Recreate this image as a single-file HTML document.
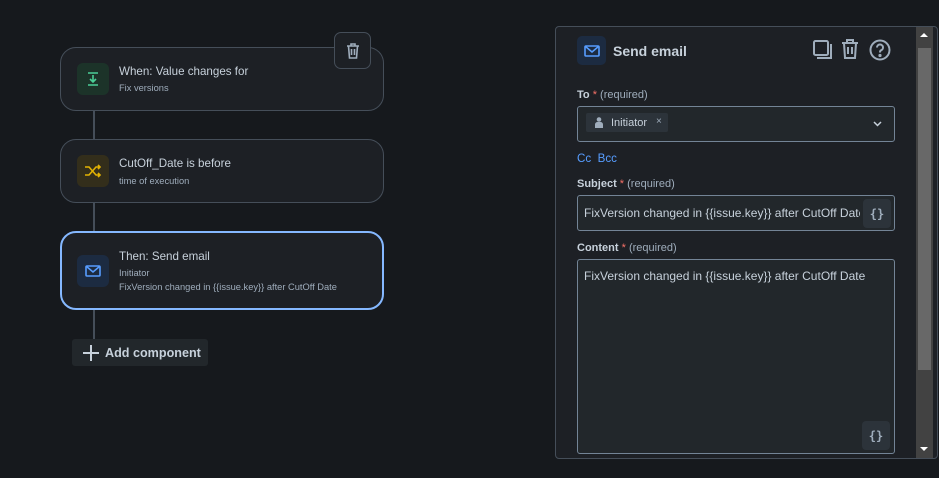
<!DOCTYPE html>
<html><head><meta charset="utf-8"><style>
*{box-sizing:border-box;margin:0;padding:0}
body{width:939px;height:478px;background:#16191d;font-family:"Liberation Sans",sans-serif;position:relative;overflow:hidden;color:#c7d1db}
.card{position:absolute;left:60px;width:324px;background:#1d2025;border:1px solid #454e59;border-radius:16px}
.ic{position:absolute;left:16px;width:32px;height:32px;border-radius:6px;display:flex;align-items:center;justify-content:center}
.t{position:absolute;left:58px;font-size:11.6px;color:#c7d1db}
.s{position:absolute;left:58px;font-size:9.3px;color:#9fadbc}
.line{position:absolute;left:93px;width:2px;background:#454e59}
.lbl{position:absolute;left:577px;font-size:11px;color:#9fadbc}
.lbl b{color:#c7d1db;font-weight:bold}
.lbl i{color:#f87168;font-style:normal}
.inp{position:absolute;left:577px;width:318px;border:1px solid #738496;border-radius:3px;background:#22272b}
.br{position:absolute;width:28px;height:29px;background:#2c333a;border-radius:4px;color:#9fadbc;font-size:12px;font-weight:bold;display:flex;align-items:center;justify-content:center;font-family:"DejaVu Sans Mono",monospace}
</style></head><body>
<div class="line" style="top:110px;height:30px"></div>
<div class="line" style="top:202px;height:30px"></div>
<div class="line" style="top:309px;height:30px"></div>

<div class="card" style="top:47px;height:64px">
 <div class="ic" style="top:15px;background:#1c3329"><svg width="16" height="16" viewBox="0 0 16 16" fill="none" stroke="#4bce97" stroke-width="1.6"><path d="M3 2h10M3 14h10M8 4v7M5 8l3 3 3-3"/></svg></div>
 <div class="t" style="top:17px">When: Value changes for</div>
 <div class="s" style="top:35px">Fix versions</div>
</div>
<div style="position:absolute;left:334px;top:32px;width:37px;height:37px;background:#1d2025;border:1px solid #454e59;border-radius:7px;display:flex;align-items:center;justify-content:center"><svg width="14" height="16" viewBox="0 0 14 16" fill="none" stroke="#9fadbc" stroke-width="1.6"><path d="M1 3h12M5 3V1h4v2M2.5 3l1 12h7l1-12M5.5 6v6M8.5 6v6"/></svg></div>

<div class="card" style="top:139px;height:64px">
 <div class="ic" style="top:15px;background:#332e1b"><svg width="18" height="14" viewBox="0 0 18 14" fill="none" stroke="#e2b203" stroke-width="1.6"><path d="M1 3h4l7 8h4M1 11h4l7-8h4M14 1l2 2-2 2M14 9l2 2-2 2"/></svg></div>
 <div class="t" style="top:17px">CutOff_Date is before</div>
 <div class="s" style="top:36px">time of execution</div>
</div>

<div class="card" style="top:231px;height:79px;border:2px solid #85b8ff">
 <div class="ic" style="top:22px;left:15px;background:#1c2b41"><svg width="16" height="12" viewBox="0 0 16 12" fill="none" stroke="#579dff" stroke-width="1.6"><rect x="1" y="1" width="14" height="10" rx="1"/><path d="M1.5 1.5L8 7l6.5-5.5"/></svg></div>
 <div class="t" style="top:17px;left:57px">Then: Send email</div>
 <div class="s" style="top:35px;left:57px">Initiator</div>
 <div class="s" style="top:49px;left:57px">FixVersion changed in {{issue.key}} after CutOff Date</div>
</div>

<div style="position:absolute;left:72px;top:339px;width:136px;height:27px;background:#22272b;border-radius:3px;display:flex;align-items:center;padding-left:10px;font-size:12.6px;font-weight:bold;color:#c7d1db"><svg width="18" height="18" viewBox="0 0 18 18" stroke="#c7d1db" stroke-width="2"><path d="M9 1v16M1 9h16"/></svg><span style="margin-left:5px">Add component</span></div>

<div style="position:absolute;left:555px;top:26px;width:383px;height:433px;background:#1d2025;border:1px solid #454e59;border-radius:4px"></div>
<div style="position:absolute;left:916px;top:27px;width:17px;height:431px;background:#424242"></div>
<div style="position:absolute;left:918px;top:48px;width:13px;height:322px;background:#686868"></div>
<div style="position:absolute;left:920px;top:33px;width:0;height:0;border-left:4px solid transparent;border-right:4px solid transparent;border-bottom:4px solid #fff"></div>
<div style="position:absolute;left:920px;top:447px;width:0;height:0;border-left:4px solid transparent;border-right:4px solid transparent;border-top:4px solid #fff"></div>

<div style="position:absolute;left:577px;top:36px;width:29px;height:29px;background:#1c2b41;border-radius:5px;display:flex;align-items:center;justify-content:center"><svg width="16" height="12" viewBox="0 0 16 12" fill="none" stroke="#579dff" stroke-width="1.6"><rect x="1" y="1" width="14" height="10" rx="1"/><path d="M1.5 1.5L8 7l6.5-5.5"/></svg></div>
<div style="position:absolute;left:613px;top:43px;font-size:14px;font-weight:bold;color:#c7d1db">Send email</div>
<svg style="position:absolute;left:811px;top:38px" width="82" height="24" viewBox="0 0 82 24" fill="none" stroke="#9fadbc" stroke-width="2"><rect x="3" y="3" width="14" height="14" rx="1.5"/><path d="M20 6v14H6"/><path d="M31 5h16M36 5V2h6v3M33 5l1 15h10l1-15M37 9v7M41 9v7"/><circle cx="69" cy="12" r="9.5"/><path d="M66 9.5a3 3 0 1 1 4 2.8c-1 .5-1 1-1 2.2"/><circle cx="69" cy="17.5" r=".6" fill="#9fadbc"/></svg>

<div class="lbl" style="top:89px"><b>To</b> <i>*</i> (required)</div>
<div class="inp" style="top:106px;height:36px">
 <div style="position:absolute;left:8px;top:6px;width:82px;height:19px;background:#2c333a;border-radius:2px;font-size:11px;color:#c7d1db;padding:4px 0 0 25px">Initiator<span style="position:absolute;left:70px;top:3px;font-size:10px;color:#9fadbc">×</span>
  <svg style="position:absolute;left:9px;top:4px" width="8" height="11" viewBox="0 0 8 11" fill="#9fadbc"><circle cx="4" cy="2.5" r="2.3"/><path d="M0 11V7.5a2.5 2.5 0 0 1 2.5-2.5h3A2.5 2.5 0 0 1 8 7.5V11z"/></svg></div>
 <svg style="position:absolute;left:295px;top:14px" width="9" height="6" viewBox="0 0 9 6" fill="none" stroke="#c7d1db" stroke-width="1.5"><path d="M1 1l3.5 3.5L8 1"/></svg>
</div>
<div style="position:absolute;left:577px;top:152px;font-size:11.6px;color:#579dff">Cc&nbsp;&nbsp;Bcc</div>
<div class="lbl" style="top:178px"><b>Subject</b> <i>*</i> (required)</div>
<div class="inp" style="top:195px;height:36px;overflow:hidden">
 <div style="position:absolute;left:6px;top:10px;font-size:12px;color:#c7d1db;white-space:nowrap;width:276px;overflow:hidden">FixVersion changed in {{issue.key}} after CutOff Date</div>
 <div class="br" style="left:285px;top:3px">{}</div>
</div>
<div class="lbl" style="top:242px"><b>Content</b> <i>*</i> (required)</div>
<div class="inp" style="top:259px;height:195px">
 <div style="position:absolute;left:6px;top:9px;font-size:12px;color:#c7d1db">FixVersion changed in {{issue.key}} after CutOff Date</div>
 <div class="br" style="left:284px;top:161px">{}</div>
</div>
</body></html>
